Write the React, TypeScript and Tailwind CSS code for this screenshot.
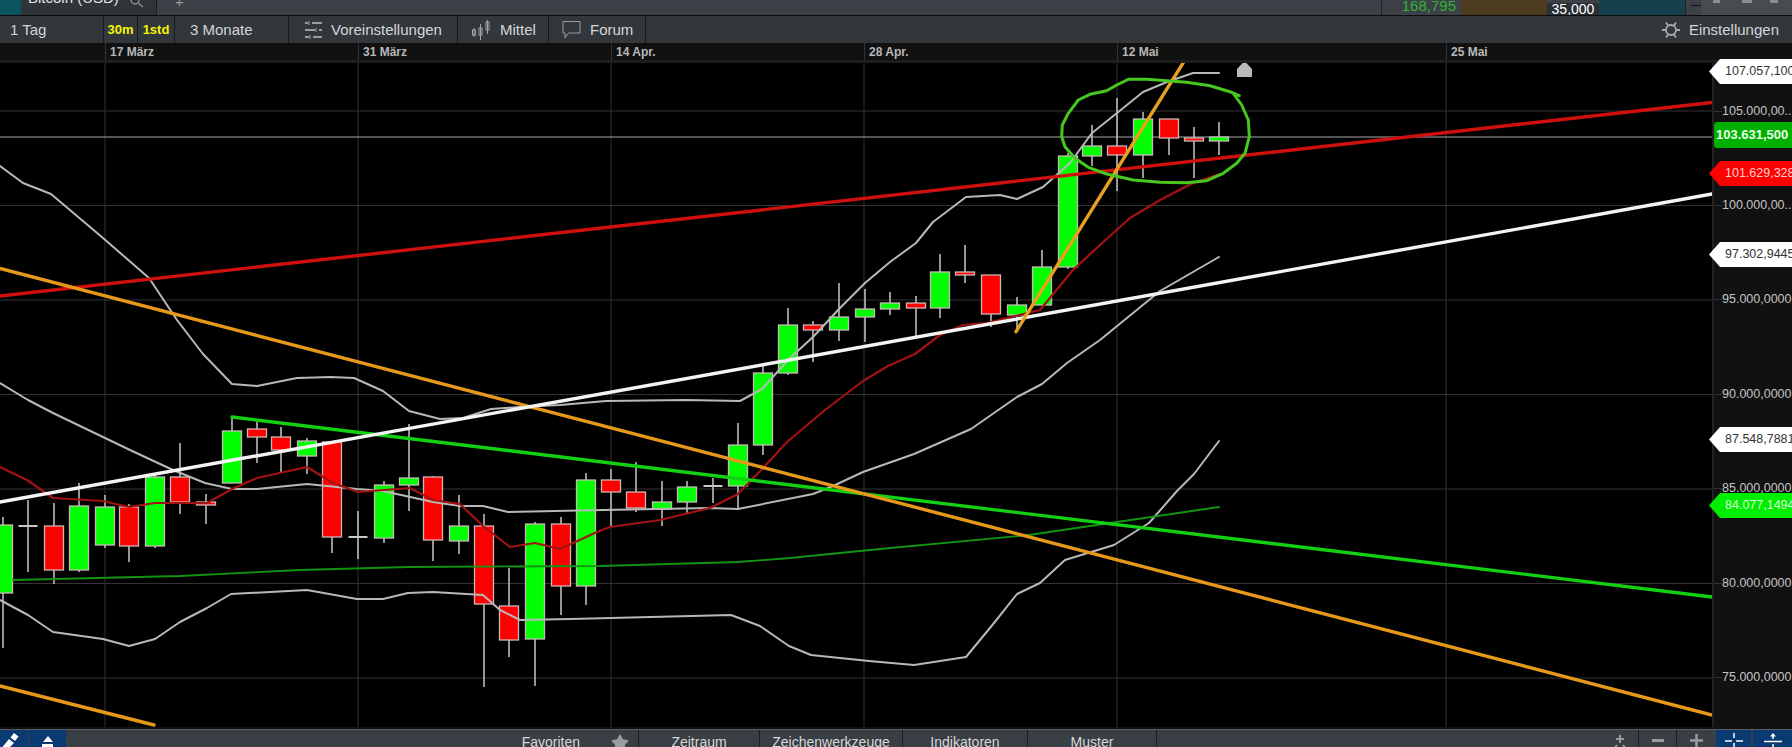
import { Star } from 'lucide-react'

type Candle = [x: number, wickTop: number, wickBottom: number, top: number, bottom: number, color: 'g' | 'r' | 'w']

const candles: Candle[] = [
  [3, 517, 648, 525, 593, 'g'],
  [28, 500, 572, 525, 527, 'w'],
  [54, 503, 584, 526, 570, 'r'],
  [79, 483, 572, 506, 570, 'g'],
  [105, 495, 548, 507, 545, 'g'],
  [129, 504, 562, 507, 546, 'r'],
  [155, 475, 548, 477, 546, 'g'],
  [180, 443, 514, 477, 502, 'r'],
  [206, 494, 524, 502, 505, 'r'],
  [232, 417, 483, 431, 483, 'g'],
  [257, 422, 463, 429, 437, 'r'],
  [281, 427, 473, 437, 450, 'r'],
  [307, 438, 474, 441, 456, 'g'],
  [332, 441, 553, 442, 537, 'r'],
  [358, 511, 559, 536, 538, 'w'],
  [384, 481, 543, 485, 538, 'g'],
  [409, 424, 511, 478, 485, 'g'],
  [433, 476, 561, 477, 540, 'r'],
  [459, 495, 554, 526, 541, 'g'],
  [484, 514, 687, 526, 604, 'r'],
  [509, 568, 657, 606, 640, 'r'],
  [535, 522, 686, 524, 639, 'g'],
  [561, 517, 615, 524, 586, 'r'],
  [586, 473, 605, 480, 586, 'g'],
  [611, 469, 526, 480, 492, 'r'],
  [636, 462, 512, 492, 508, 'r'],
  [662, 481, 526, 502, 509, 'g'],
  [687, 481, 513, 487, 502, 'g'],
  [713, 478, 503, 485, 487, 'w'],
  [738, 423, 510, 445, 486, 'g'],
  [763, 363, 455, 373, 445, 'g'],
  [788, 308, 375, 325, 373, 'g'],
  [813, 321, 362, 325, 330, 'r'],
  [839, 283, 341, 317, 330, 'g'],
  [865, 289, 342, 309, 317, 'g'],
  [890, 292, 315, 303, 309, 'g'],
  [916, 296, 338, 303, 308, 'r'],
  [940, 254, 318, 272, 308, 'g'],
  [965, 245, 283, 272, 275, 'r'],
  [991, 275, 327, 275, 314, 'r'],
  [1017, 297, 332, 305, 315, 'g'],
  [1042, 250, 305, 267, 305, 'g'],
  [1068, 153, 269, 156, 267, 'g'],
  [1092, 125, 166, 146, 156, 'g'],
  [1117, 98, 191, 146, 155, 'r'],
  [1143, 112, 178, 119, 155, 'g'],
  [1169, 119, 155, 119, 138, 'r'],
  [1194, 127, 178, 138, 141, 'r'],
  [1219, 122, 155, 137, 141, 'g'],
]

const upperBand = '0,166 23,183 51,194 103,238 149,278 177,320 203,354 232,384 257,386 297,378 331,377 354,378 383,391 409,411 440,419 463,418 491,409 520,407 560,405 606,401 686,400 740,401 762,389 790,358 813,337 840,308 865,283 890,262 916,243 933,222 966,197 1000,195 1017,199 1043,187 1070,163 1092,133 1117,113 1143,92 1167,82 1193,73 1219,73'
const midBand = '0,383 28,400 53,413 130,450 173,470 205,483 232,489 257,489 307,484 357,489 383,491 433,502 460,506 483,506 508,512 603,510 710,508 738,509 813,494 833,486 863,472 914,454 971,429 1017,397 1042,384 1067,363 1100,340 1160,291 1219,257'
const lowerBand = '0,600 28,615 53,632 103,639 129,646 155,639 180,622 207,608 231,594 307,590 357,599 383,599 408,593 433,592 483,595 500,610 520,620 571,619 731,615 760,626 789,646 811,655 869,661 914,665 966,657 994,623 1017,594 1040,583 1065,560 1114,545 1149,523 1177,491 1194,474 1219,441'
const redAvg = '0,467 27,480 53,498 103,501 129,507 155,503 207,503 232,489 257,478 307,467 333,483 358,492 410,488 433,500 460,504 483,526 510,547 535,543 560,549 597,532 610,527 660,520 710,508 738,494 763,468 787,442 825,410 863,381 888,366 915,354 940,335 963,325 987,323 1040,310 1073,270 1100,245 1130,218 1160,200 1193,183 1220,174'
const greenAvg = '13,580 180,576 300,570 408,567 600,566 738,562 790,558 880,549 1029,535 1219,507'

// hand drawn circle, taken off the zoomed crop
const ring = [
  [718, 137], [690, 125], [630, 107], [560, 97], [500, 92], [440, 88], [385, 88], [350, 105], [320, 122], [270, 133],
  [235, 150], [205, 190], [187, 225], [185, 260], [195, 290], [225, 325], [265, 352], [320, 372], [400, 390], [480, 397],
  [560, 398], [620, 392], [670, 370], [710, 340], [735, 310], [748, 260], [745, 210], [725, 165], [700, 130],
].map(([x, y]) => `${(1000 + x / 3).toFixed(1)},${(50 + y / 3).toFixed(1)}`).join(' ')

const gridX = [105, 358, 611, 864, 1117, 1446]
const gridY = [111, 205.5, 300, 394.5, 489, 583.5, 678]

const axisLabels = [
  { y: 111, text: '105.000,00...' },
  { y: 205, text: '100.000,00...' },
  { y: 299, text: '95.000,0000' },
  { y: 394, text: '90.000,0000' },
  { y: 488, text: '85.000,0000' },
  { y: 583, text: '80.000,0000' },
  { y: 677, text: '75.000,0000' },
]

const tags = [
  { top: 59, text: '107.057,100', cls: 'bg-white text-[#333]' },
  { top: 161, text: '101.629,328', cls: 'bg-[#ff0000] text-[#ffd0d0]' },
  { top: 242, text: '97.302,9445', cls: 'bg-white text-[#333]' },
  { top: 427, text: '87.548,7881', cls: 'bg-white text-[#333]' },
  { top: 493, text: '84.077,1494', cls: 'bg-[#00ee00] text-[#d8ffd8]' },
]

function Chart() {
  return (
    <svg width={1712} height={664} viewBox="0 63 1712 664" className="block shrink-0 bg-black blur-[0.4px]">
      {gridX.map((x) => (
        <line key={x} x1={x} x2={x} y1={63} y2={727} stroke="#333" />
      ))}
      {gridY.map((y) => (
        <line key={y} x1={0} x2={1712} y1={y} y2={y} stroke="#333" />
      ))}
      <line x1={0} x2={1712} y1={137} y2={137} stroke="#a8a8a8" strokeWidth={1.2} />

      {candles.map(([x, wt, wb, t, b, c]) => (
        <g key={x}>
          <line x1={x} x2={x} y1={wt} y2={wb} stroke="#bcbcbc" strokeWidth={1.6} />
          <rect
            x={x - 9.5}
            y={t}
            width={19}
            height={b - t}
            fill={c === 'g' ? '#00ff00' : c === 'r' ? '#ff0000' : '#c8c8c8'}
            stroke={c === 'w' ? 'none' : '#c9b8b8'}
            strokeWidth={1.3}
          />
        </g>
      ))}

      <g fill="none" strokeLinejoin="round" strokeLinecap="round">
        <polyline points={upperBand} stroke="#b8b8b8" strokeWidth={2} />
        <polyline points={midBand} stroke="#b8b8b8" strokeWidth={2} />
        <polyline points={lowerBand} stroke="#b8b8b8" strokeWidth={2} />
        <polyline points={greenAvg} stroke="#129412" strokeWidth={1.8} />
        <polyline points={redAvg} stroke="#a31212" strokeWidth={2.2} />
        <line x1={0} y1={296} x2={1712} y2={102.5} stroke="#d00f0f" strokeWidth={3.4} />
        <line x1={232} y1={417} x2={1712} y2={597} stroke="#12d012" strokeWidth={3.4} />
        <line x1={0} y1={268.5} x2={1712} y2={715} stroke="#e5981a" strokeWidth={3.4} />
        <line x1={0} y1={686} x2={154} y2={725} stroke="#e5981a" strokeWidth={3.4} />
        <line x1={0} y1={502} x2={1712} y2={194} stroke="#f4f4f4" strokeWidth={3.4} />
        <line x1={1016} y1={331.7} x2={1188} y2={55} stroke="#e8a020" strokeWidth={3.4} />
        <polyline points={ring} stroke="#46c81e" strokeWidth={3} />
      </g>

      <path d="M1237 69 L1244.500 61 L1252 69 V77 H1237 Z" fill="#b9b9b9" />
    </svg>
  )
}

function PriceAxis() {
  return (
    <div className="relative flex-1 border-l-2 border-[#222] bg-[#111]">
      {axisLabels.map((l) => (
        <div key={l.y} className="absolute left-0 flex -translate-y-1/2 items-center" style={{ top: l.y - 63 }}>
          <span className="h-px w-2 bg-[#333]" />
          <span className="whitespace-nowrap text-[12.5px] leading-4 text-[#c4c4c4]">{l.text}</span>
        </div>
      ))}
      <div
        className="absolute left-0 flex h-[26px] w-[80px] items-center rounded-[3px] bg-[#00b000] pl-[2px] text-[13px] font-bold text-[#e8ffe8]"
        style={{ top: 122 - 63 }}
      >
        103.631,500
      </div>
      {tags.map((t) => (
        <div
          key={t.top}
          className={`absolute -left-[5px] flex h-[25px] w-[85px] items-center overflow-hidden whitespace-nowrap pl-[16px] text-[12.5px] [clip-path:polygon(0_50%,11px_0,100%_0,100%_100%,11px_100%)] ${t.cls}`}
          style={{ top: t.top - 63 }}
        >
          {t.text}
        </div>
      ))}
    </div>
  )
}

function SlidersIcon() {
  return (
    <svg width={19} height={18} viewBox="0 0 19 18" fill="none" stroke="#9a9da0" strokeWidth={2}>
      <path d="M1 2h3M8 2h10M1 9h10M15 9h3M1 16h4M9 16h9" />
      <path d="M5 0v4M12 7v4M6 14v4" strokeWidth={1} />
    </svg>
  )
}

function CandlesIcon() {
  return (
    <svg width={20} height={22} viewBox="0 0 20 22" fill="none" stroke="#a0a3a6" strokeWidth={1}>
      <path d="M3 9v9M9.500 5v16M16.500 1v14" />
      <rect x={1.500} y={11} width={3} height={5} />
      <rect x={8} y={9} width={3} height={7} />
      <rect x={15} y={3} width={3} height={8} />
    </svg>
  )
}

function BubbleIcon() {
  return (
    <svg width={19} height={20} viewBox="0 0 19 20" fill="none" stroke="#9a9da0" strokeWidth={1}>
      <path d="M1 1.500h17v11.500H6.500L3 18v-5H1z" />
    </svg>
  )
}

function GearIcon() {
  return (
    <svg width={18} height={18} viewBox="0 0 18 18" fill="none" stroke="#a8abae" strokeWidth={1.8}>
      <circle cx={9} cy={9} r={5} />
      <path d="M0 9h3.500M14.500 9H18M4 1.500l2 3M14 1.500l-2 3M4 16.500l2-3M14 16.500l-2-3" />
    </svg>
  )
}

function ToolButton({ className, children }: { className: string; children: React.ReactNode }) {
  return <div className={`flex shrink-0 items-center border-r border-[#16181a] pt-px ${className}`}>{children}</div>
}

function BottomCell({ className, children }: { className: string; children?: React.ReactNode }) {
  return (
    <div className={`flex h-full shrink-0 justify-center border-r border-[#1c1e20] pt-[4px] text-[14px] leading-4 text-[#d8d8d8] ${className}`}>
      {children}
    </div>
  )
}

export default function App() {
  return (
    <div className="flex h-[747px] w-[1792px] flex-col overflow-hidden bg-black font-['Liberation_Sans',Arial,sans-serif]">
      {/* Top strip, cut off by the screenshot */}
      <div className="flex h-[15px] shrink-0 overflow-hidden bg-[#3c4147] text-[15px] leading-4">
        <div className="flex h-full w-[157px] shrink-0 border-r border-[#1c1e20] bg-[#2f3438]">
          <div className="h-full w-[21px] bg-[#0b5560]" />
          <span className="-mt-[10px] ml-[7px] text-[#e4e4e4]">Bitcoin (USD)</span>
          <svg width={14} height={8} viewBox="0 0 14 8" fill="none" stroke="#8a8d90" strokeWidth={1.5} className="ml-[11px]">
            <circle cx={5} cy={0} r={4} />
            <path d="M8 3l5 4" />
          </svg>
        </div>
        <span className="-mt-[6px] ml-[18px] text-[#999]">+</span>
        <div className="flex-1" />
        <div className="flex h-full w-[80px] shrink-0 justify-end border-l border-[#222] pr-[5px]">
          <span className="-mt-[2px] text-[#31b531]">168,795</span>
        </div>
        <div className="relative flex h-full w-[224px] shrink-0">
          <div className="h-full w-[86px] bg-[#4d3b20]" />
          <div className="mt-[3px] flex h-[12px] w-[52px] items-center justify-center rounded-t-[2px] bg-[#2a3036] text-[14px] text-white">
            35,000
          </div>
          <div className="h-full flex-1 bg-[#17404d]" />
        </div>
        <div className="h-full w-[16px] shrink-0 border-l border-[#222] pl-[5px] pt-[5px]">
          <div className="h-px w-[11px] bg-[#111]" />
        </div>
        <div className="flex h-full w-[91px] shrink-0 items-start bg-[#484c51] pl-[12px]">
          <div className="h-[3px] w-[7px] bg-[#8a8d90]" />
          <div className="ml-[22px] h-[3px] w-[10px] bg-[#8a8d90]" />
          <div className="ml-[18px] h-[3px] w-[8px] bg-[#8a8d90]" />
        </div>
      </div>
      <div className="h-px shrink-0 bg-[#0c0c0c]" />

      {/* Toolbar */}
      <div className="flex h-[27px] shrink-0 bg-[#32373c] text-[15px] text-[#d4d6d8]">
        <ToolButton className="w-[104px] pl-[10px]">1 Tag</ToolButton>
        <ToolButton className="w-[34px] justify-center text-[13px] font-bold text-[#f5f500]">30m</ToolButton>
        <ToolButton className="w-[37px] justify-center text-[13px] font-bold text-[#f5f500]">1std</ToolButton>
        <ToolButton className="w-[114px] pl-[15px]">3 Monate</ToolButton>
        <ToolButton className="w-[169px] gap-[8px] pl-[15px]">
          <SlidersIcon />
          Voreinstellungen
        </ToolButton>
        <ToolButton className="w-[91px] gap-[9px] pl-[13px]">
          <CandlesIcon />
          Mittel
        </ToolButton>
        <ToolButton className="w-[97px] gap-[9px] pl-[13px]">
          <BubbleIcon />
          Forum
        </ToolButton>
        <div className="flex-1" />
        <div className="flex items-center gap-[9px] pr-[13px] pt-px">
          <GearIcon />
          Einstellungen
        </div>
      </div>

      {/* Date axis */}
      <div className="flex h-[17px] shrink-0 bg-[#111] text-[12px] font-bold leading-[19px] text-[#b8b8b8]">
        <div className="w-[105px]" />
        <div className="w-[253px] border-l border-[#333] pl-1">17 März</div>
        <div className="w-[253px] border-l border-[#333] pl-1">31 März</div>
        <div className="w-[253px] border-l border-[#333] pl-1">14 Apr.</div>
        <div className="w-[253px] border-l border-[#333] pl-1">28 Apr.</div>
        <div className="w-[329px] border-l border-[#333] pl-1">12 Mai</div>
        <div className="flex-1 border-l border-[#333] pl-1">25 Mai</div>
      </div>
      <div className="h-[3px] shrink-0 bg-[#1e1e1e]" />

      {/* Chart and price scale */}
      <div className="flex h-[664px] shrink-0">
        <Chart />
        <PriceAxis />
      </div>
      <div className="h-[2px] shrink-0 bg-[#111]" />

      {/* Bottom bar, cut off by the screenshot */}
      <div className="flex h-[19px] shrink-0 overflow-hidden border-t border-[#5a5e63] bg-[#3a3f45]">
        <div className="h-full w-[29px] shrink-0 border-r border-[#3a3f45] bg-[#0a3a72]">
          <svg width={22} height={18} viewBox="0 0 22 18" fill="white">
            <path d="M0 20L9 9l5 4-8 8z" />
            <path d="M10.500 7.500l3.500-4.500 4.500 3.500-3.500 4.500z" />
          </svg>
        </div>
        <div className="flex h-full w-[37px] shrink-0 flex-col items-center gap-[2px] bg-[#0a3a72] pt-[6px]">
          <span className="h-0 w-0 border-x-[5px] border-b-[6px] border-x-transparent border-b-white" />
          <span className="h-[4px] w-[11px] bg-white" />
        </div>
        <BottomCell className="w-[573px] gap-[31px] !justify-end pr-[9px]">
          Favoriten
          <Star size={18} fill="#9a9da0" stroke="#9a9da0" />
        </BottomCell>
        <BottomCell className="w-[121px]">Zeitraum</BottomCell>
        <BottomCell className="w-[143px]">Zeichenwerkzeuge</BottomCell>
        <BottomCell className="w-[125px]">Indikatoren</BottomCell>
        <BottomCell className="w-[129px]">Muster</BottomCell>
        <div className="flex h-full w-[482px] shrink-0 justify-end border-r border-[#1c1e20] pr-[9px] pt-[5px]">
          <svg width={18} height={14} viewBox="0 0 18 14" fill="none" stroke="#9a9da0" strokeWidth={2}>
            <path d="M9 0v8M5 4h8M3 14l3-4M15 14l-3-4" />
          </svg>
        </div>
        <div className="flex h-full w-[38px] shrink-0 justify-center border-r border-[#1c1e20] pt-[9px]">
          <div className="h-[3px] w-[12px] bg-[#9a9da0]" />
        </div>
        <div className="flex h-full w-[39px] shrink-0 justify-center pt-[4px]">
          <svg width={13} height={13} viewBox="0 0 13 13" stroke="#9a9da0" strokeWidth={2.500}>
            <path d="M0 6.500h13M6.500 0v13" />
          </svg>
        </div>
        <div className="flex h-full w-[37px] shrink-0 justify-center border-r-2 border-[#3a3f45] bg-[#0a3a72] pt-[3px]">
          <svg width={18} height={15} viewBox="0 0 18 15" stroke="white" strokeWidth={1.500}>
            <path d="M0 8h7M11 8h7M9 0v5M9 10v5" />
          </svg>
        </div>
        <div className="flex h-full flex-1 justify-center bg-[#0a3a72] pt-[3px]">
          <svg width={18} height={15} viewBox="0 0 18 15" stroke="white" strokeWidth={1.500} fill="white">
            <path d="M0 8.500h18M9 3v3M9 11v4" />
            <path d="M6 3.500L9 0l3 3.500z" stroke="none" />
          </svg>
        </div>
      </div>
    </div>
  )
}
